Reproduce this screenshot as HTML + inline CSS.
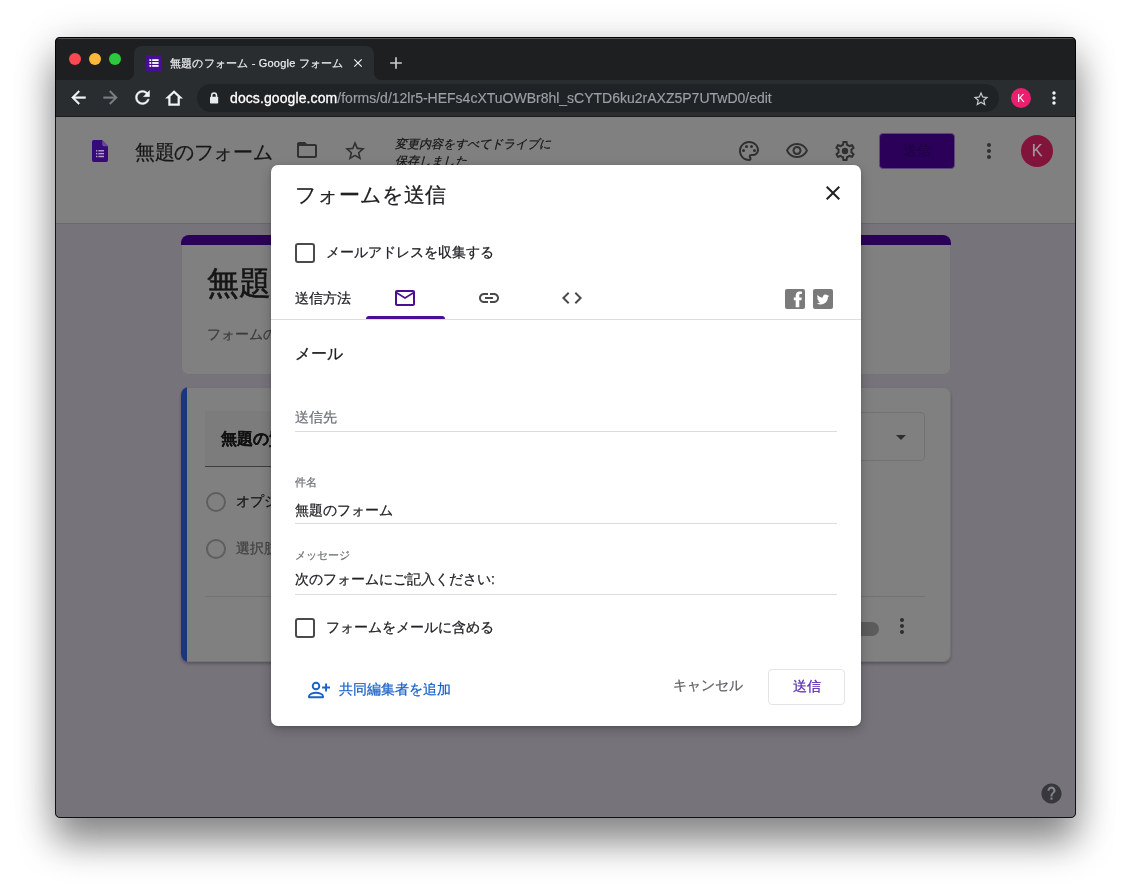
<!DOCTYPE html>
<html lang="ja">
<head>
<meta charset="utf-8">
<title>無題のフォーム - Google フォーム</title>
<style>
*{box-sizing:border-box;margin:0;padding:0}
html,body{width:1131px;height:891px;overflow:hidden;background:#fff}
body{font-family:"Liberation Sans",sans-serif;position:relative;color:#202124;-webkit-text-stroke:.25px currentColor}
.abs{position:absolute}
svg{display:block;position:absolute}
#win{position:absolute;left:55px;top:37px;width:1021px;height:781px;border-radius:5px;background:#76737a;
  box-shadow:0 26px 36px rgba(0,0,0,.37),0 8px 42px rgba(0,0,0,.22);}
#ring{position:absolute;left:0;top:0;width:1021px;height:781px;border-radius:5px;border:1px solid rgba(0,0,0,.85);pointer-events:none}
#clip{will-change:transform;position:absolute;left:0;top:0;width:1021px;height:781px;border-radius:5px;overflow:hidden}
/* ===== browser chrome ===== */
#tabstrip{position:absolute;left:0;top:0;width:1021px;height:43px;background:#1e1f21}
#hair{position:absolute;left:1px;top:1px;width:1019px;height:1px;background:#55565a}
#toolbar{position:absolute;left:0;top:43px;width:1021px;height:37px;background:#2a2d30;border-bottom:1px solid #1b1c1e}
.tl{position:absolute;top:16px;width:12px;height:12px;border-radius:50%}
#tab{position:absolute;left:79px;top:9px;width:240px;height:34px;background:#2a2d30;border-radius:8px 8px 0 0}
#tab:before,#tab:after{content:"";position:absolute;bottom:0;width:8px;height:8px}
#tab:before{left:-8px;background:radial-gradient(circle at 0 0,transparent 8px,#2a2d30 8.5px)}
#tab:after{right:-8px;background:radial-gradient(circle at 100% 0,transparent 8px,#2a2d30 8.5px)}
#tabtitle{position:absolute;left:36px;top:9px;font-size:11px;letter-spacing:.2px;line-height:16px;color:#e8eaed;white-space:nowrap}
#omni{position:absolute;left:142px;top:47px;width:802px;height:28px;border-radius:14px;background:#202326}
#url{-webkit-text-stroke:.15px #9aa0a6;position:absolute;left:33px;top:5px;font-size:14px;line-height:18px;color:#9aa0a6;white-space:nowrap;letter-spacing:0}
#url b{font-weight:normal;color:#fff;letter-spacing:.1px;-webkit-text-stroke:.3px #fff}
/* ===== page ===== */
#page{position:absolute;left:0;top:80px;width:1021px;height:701px;background:#76737a;overflow:hidden}
#hdr{position:absolute;left:0;top:0;width:1021px;height:107px;background:#808080;border-bottom:1px solid #6a686e}

/* header items */
.ic{fill:#303030}
#ftitle{position:absolute;left:80px;top:21px;font-size:20px;letter-spacing:-.4px;line-height:28px;color:#161616;white-space:nowrap}
#saved{position:absolute;left:340px;top:19px;width:160px;font-size:12px;line-height:17px;color:#161616;font-style:italic}
#sendbtn{position:absolute;left:824px;top:16px;width:76px;height:36px;border-radius:4px;background:#2b0059;border:1px solid #5d4678;color:#21004a;font-size:14px;line-height:32px;text-align:center}
#avatar{position:absolute;left:966px;top:18px;width:32px;height:32px;border-radius:50%;background:#82133a;color:#a3979c;font-size:16px;line-height:32px;text-align:center}
/* cards */
.card{position:absolute;left:126px;width:770px;background:#808080;border-radius:8px;overflow:hidden}
.card:before{content:"";position:absolute;left:0;top:0;right:0;bottom:0;border:1px solid #757378;border-radius:8px}
#c1{top:118px;height:139.500px}
#c1 .band{position:absolute;left:0;top:0;width:770px;height:10px;background:#2b0059}
#c1 h1{position:absolute;left:26px;top:28px;font-size:32px;line-height:40px;font-weight:normal;color:#151515;white-space:nowrap;-webkit-text-stroke:.6px #151515}
#c1 p{position:absolute;left:26px;top:89px;font-size:14px;line-height:20px;color:#3c3c3c;white-space:nowrap}
#c2{top:270px;height:275px;box-shadow:0 2px 3px rgba(0,0,0,.25)}
#c2 .bar{position:absolute;left:0;top:0;width:6px;height:275px;background:#1a377d}
#qbox{position:absolute;left:24px;top:24px;width:388px;height:56px;background:#7c7c7c;border-bottom:1px solid #3c3c3c}
#qbox span{position:absolute;left:16px;top:17px;font-size:16px;line-height:22px;color:#111;white-space:nowrap;font-weight:bold}
#dd{position:absolute;left:470px;top:25px;width:274px;height:49px;border:1px solid #727272;border-radius:4px}
.radio{position:absolute;left:25px;width:20px;height:20px;border:2px solid #5e5e5e;border-radius:50%}
.opt{position:absolute;left:55px;font-size:14px;line-height:20px;white-space:nowrap;color:#141414}
#sep{position:absolute;left:24px;top:209px;width:720px;height:1px;background:#727272}
#help{position:absolute;left:984.500px;top:665px;width:23px;height:23px}
/* dialog */
#dlg{position:absolute;left:216px;top:47.500px;width:590px;height:561px;background:#fff;border-radius:7px;box-shadow:0 4px 12px rgba(0,0,0,.22),0 1px 3px rgba(0,0,0,.15);overflow:hidden;color:#202124}
#dlg h2{position:absolute;left:24px;top:14px;font-size:21px;line-height:32px;font-weight:normal;color:#202124;white-space:nowrap}
.cb{position:absolute;left:24px;width:20px;height:20px;border:2px solid #4a4a4a;border-radius:3px}
.cbl{position:absolute;left:55px;font-size:14px;line-height:20px;white-space:nowrap;color:#202124}
#via{position:absolute;left:24px;top:123px;font-size:14px;line-height:20px;white-space:nowrap;color:#202124}
#uline{position:absolute;left:95px;top:151px;width:79px;height:3px;background:#4a0d96;border-radius:3px 3px 0 0}
#div1{position:absolute;left:0;top:154px;width:590px;height:1px;background:#dddddd}
#mailh{position:absolute;left:24px;top:178px;font-size:15.5px;line-height:22px;white-space:nowrap;color:#202124}
.fl{position:absolute;left:24px;font-size:10.5px;line-height:14px;color:#70757a;white-space:nowrap}
.fv{position:absolute;left:24px;font-size:14px;line-height:20px;color:#202124;white-space:nowrap}
.fu{position:absolute;left:24px;width:542px;height:1px;background:#dcdcdc}
#collab{position:absolute;left:68px;top:514px;font-size:14px;line-height:20px;color:#1a62c8;white-space:nowrap}
#cancel{position:absolute;left:402px;top:510px;font-size:14px;line-height:20px;color:#5f6368;white-space:nowrap}
#send2{position:absolute;left:497px;top:504px;width:77px;height:36px;border:1px solid #e4e4e8;border-radius:4px;color:#5b2ab0;font-size:14px;line-height:32px;text-align:center}
</style>
</head>
<body>
<div id="win"><div id="clip">
  <div id="tabstrip">
    <div class="tl" style="left:14px;background:#fc4850"></div>
    <div class="tl" style="left:34px;background:#fdb83a"></div>
    <div class="tl" style="left:54px;background:#2cc83f"></div>
    <div id="tab">
      <svg style="left:12px;top:9px" width="16" height="16" viewBox="0 0 16 16"><rect width="16" height="16" fill="#4a0d96"/><g fill="#fff"><rect x="3.4" y="4.2" width="1.8" height="1.8"/><rect x="6.2" y="4.2" width="6.4" height="1.8"/><rect x="3.4" y="7.1" width="1.8" height="1.8"/><rect x="6.2" y="7.1" width="6.4" height="1.8"/><rect x="3.4" y="10" width="1.8" height="1.8"/><rect x="6.2" y="10" width="6.4" height="1.8"/></g></svg>
      <div id="tabtitle">無題のフォーム - Google フォーム</div>
      <svg style="left:217px;top:10px" width="14" height="14" viewBox="0 0 24 24"><path fill="#f1f3f4" d="M19 6.41L17.59 5 12 10.59 6.41 5 5 6.41 10.59 12 5 17.59 6.41 19 12 13.41 17.59 19 19 17.59 13.41 12z"/></svg>
    </div>
    <svg style="left:331px;top:16px" width="20" height="20" viewBox="0 0 24 24"><path fill="#c8cacd" d="M19 13h-6v6h-2v-6H5v-2h6V5h2v6h6v2z"/></svg>
  </div>
  <div id="toolbar">
    <svg style="left:12.500px;top:7.400px" width="21" height="21" viewBox="0 0 24 24"><path fill="#f1f3f4" stroke="#f1f3f4" stroke-width=".5" d="M20 11H7.830l5.590-5.590L12 4l-8 8 8 8 1.410-1.410L7.830 13H20v-2z"/></svg>
    <svg style="left:44.700px;top:7.400px" width="21" height="21" viewBox="0 0 24 24"><path fill="#7c7e82" stroke="#7c7e82" stroke-width=".4" d="M12 4l-1.410 1.410L16.170 11H4v2h12.170l-5.580 5.590L12 20l8-8z"/></svg>
    <svg style="left:76.600px;top:7.300px" width="21" height="21" viewBox="0 0 24 24"><path fill="#f1f3f4" stroke="#f1f3f4" stroke-width=".5" d="M17.650 6.350C16.200 4.900 14.210 4 12 4c-4.420 0-7.990 3.580-7.990 8s3.570 8 7.990 8c3.730 0 6.840-2.550 7.730-6h-2.080c-.82 2.330-3.040 4-5.650 4-3.310 0-6-2.690-6-6s2.690-6 6-6c1.660 0 3.140.69 4.220 1.780L13 11h7V4l-2.350 2.350z"/></svg>
    <svg style="left:105px;top:5px" width="30" height="26" viewBox="105 5 30 26"><path fill="none" stroke="#f1f3f4" stroke-width="2.200" stroke-linejoin="miter" d="M119.050 11.700L112.900 17.500H114.400V24.700H123.700V17.500H125.200Z"/></svg>
    <svg style="left:989px;top:8px" width="20" height="20" viewBox="0 0 24 24"><path fill="#f1f3f4" d="M12 8c1.100 0 2-.9 2-2s-.9-2-2-2-2 .9-2 2 .9 2 2 2zm0 2c-1.100 0-2 .9-2 2s.9 2 2 2 2-.9 2-2-.9-2-2-2zm0 6c-1.100 0-2 .9-2 2s.9 2 2 2 2-.9 2-2-.9-2-2-2z"/></svg>
    <div class="abs" style="left:956px;top:8px;width:20px;height:20px;border-radius:50%;background:#e8206e;color:#fff;font-size:11px;line-height:20px;text-align:center;-webkit-text-stroke:0">K</div>
  </div>
  <div id="omni">
    <svg style="left:11px;top:7px" width="12" height="14" viewBox="0 0 12 14"><rect x="2" y="5.800" width="8.200" height="6.800" rx=".8" fill="#e8eaed"/><path d="M3.700 6.500V4.300a2.400 2.400 0 0 1 4.800 0V6.500" fill="none" stroke="#e8eaed" stroke-width="1.500"/></svg>
    <svg style="left:775px;top:5.500px" width="18" height="18" viewBox="0 0 24 24"><path fill="#c8cacd" d="M22 9.240l-7.190-.62L12 2 9.190 8.630 2 9.240l5.460 4.730L5.820 21 12 17.270 18.180 21l-1.630-7.030L22 9.240zM12 15.400l-3.760 2.270 1-4.280-3.320-2.880 4.380-.38L12 6.100l1.710 4.040 4.380.38-3.320 2.880 1 4.280L12 15.400z"/></svg>
    <div id="url"><b>docs.google.com</b>/forms/d/12lr5-HEFs4cXTuOWBr8hl_sCYTD6ku2rAXZ5P7UTwD0/edit</div></div>
  <div id="page">
    <div id="hdr">
      <svg style="left:37px;top:23px" width="16" height="22" viewBox="0 0 18 23" preserveAspectRatio="none"><path fill="#360a78" d="M2 0h9.500L18 6.500V21a2 2 0 0 1-2 2H2a2 2 0 0 1-2-2V2a2 2 0 0 1 2-2z"/><path fill="#6a4a9e" d="M11.500 0L18 6.500h-5a1.500 1.500 0 0 1-1.500-1.500z"/><g fill="#b3a3cc"><rect x="4.500" y="10.500" width="1.500" height="1.500"/><rect x="7.200" y="10.500" width="6.300" height="1.500"/><rect x="4.500" y="13.500" width="1.500" height="1.500"/><rect x="7.200" y="13.500" width="6.300" height="1.500"/><rect x="4.500" y="16.500" width="1.500" height="1.500"/><rect x="7.200" y="16.500" width="6.300" height="1.500"/></g></svg>
      <div id="ftitle">無題のフォーム</div>
      <svg class="ic" style="left:240px;top:21px" width="24" height="24" viewBox="0 0 24 24"><path d="M20 6h-8l-2-2H4c-1.100 0-1.990.9-1.990 2L2 18c0 1.100.9 2 2 2h16c1.100 0 2-.9 2-2V8c0-1.100-.9-2-2-2zm0 12H4V8h16v10z"/></svg>
      <svg class="ic" style="left:288px;top:22px" width="24" height="24" viewBox="0 0 24 24"><path d="M22 9.240l-7.190-.62L12 2 9.190 8.630 2 9.240l5.460 4.730L5.820 21 12 17.270 18.180 21l-1.630-7.030L22 9.240zM12 15.400l-3.760 2.270 1-4.280-3.320-2.880 4.380-.38L12 6.100l1.710 4.040 4.380.38-3.320 2.880 1 4.280L12 15.400z"/></svg>
      <div id="saved">変更内容をすべてドライブに保存しました</div>
      <svg class="ic" style="left:682px;top:22px" width="24" height="24" viewBox="0 0 24 24"><path d="M12 22C6.490 22 2 17.510 2 12S6.490 2 12 2s10 4.040 10 9c0 3.310-2.690 6-6 6h-1.770c-.28 0-.5.22-.5.5 0 .12.05.23.13.33.41.47.64 1.060.64 1.670A2.500 2.500 0 0 1 12 22zm0-18c-4.410 0-8 3.590-8 8s3.590 8 8 8c.28 0 .5-.22.5-.5a.54.54 0 0 0-.14-.35c-.41-.46-.63-1.050-.63-1.650a2.500 2.500 0 0 1 2.500-2.500H16c2.210 0 4-1.790 4-4 0-3.860-3.590-7-8-7z"/><circle cx="6.500" cy="11.500" r="1.500"/><circle cx="9.500" cy="7.500" r="1.500"/><circle cx="14.500" cy="7.500" r="1.500"/><circle cx="17.500" cy="11.500" r="1.500"/></svg>
      <svg class="ic" style="left:730px;top:22px" width="24" height="24" viewBox="0 0 24 24"><path d="M12 6a9.770 9.770 0 0 1 8.820 5.500C19.170 14.870 15.790 17 12 17s-7.170-2.130-8.820-5.500A9.770 9.770 0 0 1 12 6m0-2C7 4 2.730 7.110 1 11.500 2.730 15.890 7 19 12 19s9.270-3.110 11-7.500C21.270 7.110 17 4 12 4zm0 5a2.500 2.500 0 0 1 0 5 2.500 2.500 0 0 1 0-5m0-2c-2.480 0-4.500 2.020-4.500 4.500S9.520 16 12 16s4.500-2.020 4.500-4.500S14.480 7 12 7z"/></svg>
      <svg class="ic" style="left:778px;top:22px" width="24" height="24" viewBox="0 0 24 24"><path d="M19.430 12.980c.04-.32.07-.64.07-.98 0-.34-.03-.66-.07-.98l2.110-1.650c.19-.15.24-.42.12-.64l-2-3.460a.5.5 0 0 0-.61-.22l-2.490 1c-.52-.4-1.080-.73-1.690-.98l-.38-2.650A.488.488 0 0 0 14 2h-4c-.25 0-.46.18-.49.42l-.38 2.650c-.61.25-1.170.59-1.690.98l-2.490-1a.566.566 0 0 0-.18-.03c-.17 0-.34.09-.43.25l-2 3.460c-.13.22-.07.49.12.64l2.110 1.650c-.04.32-.07.65-.07.980 0 .33.03.66.07.980l-2.110 1.650c-.19.15-.24.42-.12.64l2 3.460a.5.5 0 0 0 .61.22l2.490-1c.52.4 1.080.73 1.690.98l.38 2.650c.03.24.24.42.49.42h4c.25 0 .46-.18.49-.42l.38-2.650c.61-.25 1.170-.59 1.690-.98l2.490 1c.06.02.12.03.18.03.17 0 .34-.09.43-.25l2-3.460c.12-.22.07-.49-.12-.64l-2.110-1.650zm-1.980-1.710c.04.31.05.52.05.73 0 .21-.02.43-.05.73l-.14 1.130.89.7 1.080.84-.7 1.210-1.270-.51-1.040-.42-.9.68c-.43.32-.84.56-1.250.73l-1.060.43-.16 1.130-.2 1.350h-1.400l-.19-1.350-.16-1.130-1.060-.43c-.43-.18-.83-.41-1.230-.71l-.91-.7-1.060.43-1.270.51-.7-1.210 1.080-.84.89-.7-.14-1.130c-.03-.31-.05-.54-.05-.74s.02-.43.05-.73l.14-1.130-.89-.7-1.080-.84.7-1.210 1.270.51 1.040.42.9-.68c.43-.32.84-.56 1.250-.73l1.060-.43.16-1.130.2-1.350h1.390l.19 1.350.16 1.130 1.060.43c.43.18.83.41 1.230.71l.91.7 1.060-.43 1.270-.51.7 1.210-1.070.85-.89.7.14 1.130z"/><circle cx="12" cy="12" r="3.200"/></svg>
      <div id="sendbtn">送信</div>
      <svg class="ic" style="left:922px;top:22px" width="24" height="24" viewBox="0 0 24 24"><path d="M12 8c1.100 0 2-.9 2-2s-.9-2-2-2-2 .9-2 2 .9 2 2 2zm0 2c-1.100 0-2 .9-2 2s.9 2 2 2 2-.9 2-2-.9-2-2-2zm0 6c-1.100 0-2 .9-2 2s.9 2 2 2 2-.9 2-2-.9-2-2-2z"/></svg>
      <div id="avatar">K</div>
    </div>
    <div class="card" id="c1"><div class="band"></div><h1>無題のフォーム</h1><p>フォームの説明</p></div>
    <div class="card" id="c2"><div class="bar"></div>
      <div id="qbox"><span>無題の質問</span></div>
      <div id="dd"><svg style="left:237px;top:12px" width="24" height="24" viewBox="0 0 24 24"><path fill="#2e2e2e" d="M7 10l5 5 5-5z"/></svg></div>
      <div class="radio" style="top:104.500px"></div><div class="opt" style="top:104px">オプション 1</div>
      <div class="radio" style="top:151.500px"></div><div class="opt" style="top:151px;color:#424242">選択肢を追加</div>
      <div id="sep"></div>
      <div class="abs" style="left:640px;top:235px;width:58px;height:14px;border-radius:7px;background:#5c5c5c"></div>
      <svg style="left:709px;top:227px" width="24" height="24" viewBox="0 0 24 24"><path fill="#2e2e2e" d="M12 8c1.100 0 2-.9 2-2s-.9-2-2-2-2 .9-2 2 .9 2 2 2zm0 2c-1.100 0-2 .9-2 2s.9 2 2 2 2-.9 2-2-.9-2-2-2zm0 6c-1.100 0-2 .9-2 2s.9 2 2 2 2-.9 2-2-.9-2-2-2z"/></svg>
    </div>
    <svg id="help" viewBox="0 0 24 24"><circle cx="12" cy="12" r="9" fill="#848289"/><path fill="#38373c" d="M12 1.500C6.200 1.500 1.500 6.200 1.500 12S6.200 22.500 12 22.500 22.500 17.800 22.500 12 17.800 1.500 12 1.500zm1.100 17h-2.200v-2.200h2.200v2.200zm2.100-7.400l-.9.92c-.72.730-1.200 1.380-1.200 2.980h-2.200v-.5c0-1.100.45-2.100 1.170-2.830l1.240-1.260c.37-.36.59-.86.59-1.410 0-1.100-.9-2-2-2s-2 .9-2 2H7.800c0-2.320 1.880-4.200 4.200-4.200s4.200 1.880 4.200 4.200c0 .92-.37 1.760-1 2.100z"/></svg>
    <div id="dlg">
      <h2>フォームを送信</h2>
      <svg style="left:550px;top:16.500px" width="24" height="24" viewBox="0 0 24 24"><path fill="#202124" d="M19 6.410L17.590 5 12 10.590 6.410 5 5 6.410 10.590 12 5 17.590 6.410 19 12 13.410 17.590 19 19 17.590 13.410 12z"/></svg>
      <div class="cb" style="top:78px"></div><div class="cbl" style="top:77px">メールアドレスを収集する</div>
      <div id="via">送信方法</div>
      <svg style="left:122px;top:121.500px" width="24" height="24" viewBox="0 0 24 24"><path fill="#4a0d96" d="M20 4H4c-1.100 0-1.990.9-1.990 2L2 18c0 1.100.9 2 2 2h16c1.100 0 2-.9 2-2V6c0-1.100-.9-2-2-2zm0 14H4V8l8 5 8-5v10zm-8-7L4 6h16l-8 5z"/></svg>
      <svg style="left:206px;top:121.500px" width="24" height="24" viewBox="0 0 24 24"><path fill="#4a4a4a" d="M3.900 12c0-1.710 1.390-3.100 3.100-3.100h4V7H7c-2.760 0-5 2.240-5 5s2.240 5 5 5h4v-1.900H7c-1.710 0-3.100-1.390-3.100-3.100zM8 13h8v-2H8v2zm9-6h-4v1.900h4c1.710 0 3.100 1.390 3.100 3.100s-1.390 3.100-3.100 3.100h-4V17h4c2.760 0 5-2.240 5-5s-2.240-5-5-5z"/></svg>
      <svg style="left:289px;top:121px" width="24" height="24" viewBox="0 0 24 24"><path fill="#4a4a4a" d="M9.400 16.600L4.800 12l4.600-4.600L8 6l-6 6 6 6 1.400-1.400zm5.200 0l4.600-4.600-4.600-4.600L16 6l6 6-6 6-1.400-1.400z"/></svg>
      <svg style="left:514px;top:124px" width="20" height="20" viewBox="0 0 20 20"><rect width="20" height="20" rx="2" fill="#7a7a7a"/><path fill="#fff" d="M10.700 18.200V11.300H8.800V8.500h1.900V6.600c0-2.700 1.600-4.200 4-4.200.9 0 1.800.1 2.200.15V5h-1.300c-1.100 0-1.350.55-1.350 1.400v2.100h2.550l-.4 2.800h-2.150v6.900z"/></svg>
      <svg style="left:542px;top:124px" width="20" height="20" viewBox="0 0 20 20"><rect width="20" height="20" rx="2" fill="#7a7a7a"/><path fill="#fff" d="M16.300 6.700c-.5.2-1 .4-1.500.4.5-.3 1-.8 1.100-1.400-.5.3-1 .5-1.600.6a2.600 2.600 0 0 0-4.400 2.300C7.800 8.500 5.900 7.500 4.600 5.900c-.7 1.200-.3 2.700.8 3.400-.4 0-.8-.1-1.200-.3 0 1.200.9 2.300 2.100 2.500-.4.100-.8.100-1.200 0 .3 1 1.300 1.800 2.400 1.800-1.100.9-2.400 1.200-3.800 1.100 1.200.7 2.500 1.100 3.900 1.100 4.800 0 7.500-4 7.300-7.600.5-.3 1-.8 1.400-1.200z"/></svg>
      <div id="uline"></div><div id="div1"></div>
      <div id="mailh">メール</div>
      <div class="fv" style="top:242px;color:#70757a">送信先</div><div class="fu" style="top:266px"></div>
      <div class="fl" style="top:310px">件名</div><div class="fv" style="top:335px">無題のフォーム</div><div class="fu" style="top:358px"></div>
      <div class="fl" style="top:383px">メッセージ</div><div class="fv" style="top:404px">次のフォームにご記入ください:</div><div class="fu" style="top:429px"></div>
      <div class="cb" style="top:453px"></div><div class="cbl" style="top:452px">フォームをメールに含める</div>
      <svg style="left:36px;top:514px" width="24" height="22" viewBox="0 0 24 22"><g fill="none" stroke="#1a62c8" stroke-width="1.900"><circle cx="9" cy="7" r="3.300"/><path d="M2 18.300v-1c0-2.300 4.500-3.500 7-3.500s7 1.200 7 3.500v1z" stroke-linejoin="round"/></g><path fill="#1a62c8" d="M19.600 4.500h1.900v3h3v1.900h-3v3h-1.900v-3h-3V7.500h3z" transform="translate(-1.500 0)"/></svg>
      <div id="collab">共同編集者を追加</div>
      <div id="cancel">キャンセル</div>
      <div id="send2">送信</div>
    </div>
  </div>
</div><div id="hair"></div><div id="ring"></div></div>
</body>
</html>
